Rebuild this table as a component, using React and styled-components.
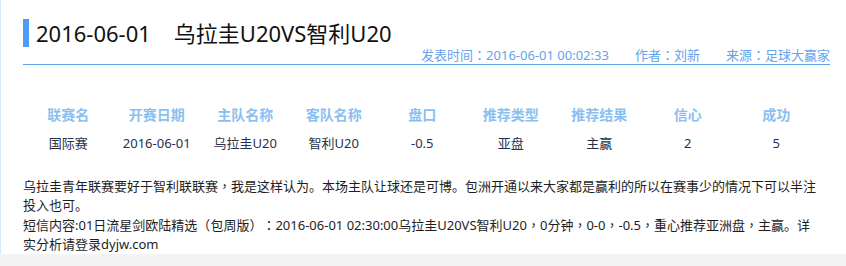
import styled, { createGlobalStyle } from "styled-components";

const GlobalStyle = createGlobalStyle`
  html, body {
    margin: 0;
    padding: 0;
    background: #f4f4f4;
  }
  body {
    font-family: "Noto Sans", "Noto Sans CJK SC", sans-serif;
    text-spacing-trim: space-all;
  }
`;

const columns = ["联赛名", "开赛日期", "主队名称", "客队名称", "盘口", "推荐类型", "推荐结果", "信心", "成功"];
const values = ["国际赛", "2016-06-01", "乌拉圭U20", "智利U20", "-0.5", "亚盘", "主赢", "2", "5"];

// full-width comma, colon and brackets sit centred in the original font
const withPunct = (text) =>
  text.split(/([，：（）])/).map((part, i) =>
    /^[，：（）]$/.test(part) ? (
      <Punct key={i} lang="zh-TW">
        {part}
      </Punct>
    ) : (
      part
    )
  );

const App = () => {
  return (
    <>
      <GlobalStyle />
      <Article lang="zh-CN">
        <Title>
          2016-06-01<Match>乌拉圭U20VS智利U20</Match>
        </Title>
        <Meta>
          <span>{withPunct("发表时间：2016-06-01 00:02:33")}</span>
          <span>{withPunct("作者：刘新")}</span>
          <span>{withPunct("来源：足球大赢家")}</span>
        </Meta>
        <Table>
          {columns.map((c) => (
            <Head key={c}>{c}</Head>
          ))}
          {values.map((v, i) => (
            <Cell key={i}>{v}</Cell>
          ))}
        </Table>
        <Body>
          <p>{withPunct("乌拉圭青年联赛要好于智利联联赛，我是这样认为。本场主队让球还是可博。包洲开通以来大家都是赢利的所以在赛事少的情况下可以半注投入也可。")}</p>
          <p>{withPunct("短信内容:01日流星剑欧陆精选（包周版）：2016-06-01 02:30:00乌拉圭U20VS智利U20，0分钟，0-0，-0.5，重心推荐亚洲盘，主赢。详实分析请登录dyjw.com")}</p>
        </Body>
      </Article>
    </>
  );
};

export default App;

const Article = styled.div`
  background: #fff;
  border-left: 1px solid #d8eafb;
  padding: 19px 16px 0 22px;
`;

const Title = styled.h1`
  margin: 0;
  border-left: 6px solid #4d9cf6;
  padding-left: 7px;
  height: 28px;
  line-height: 28px;
  font-size: 22px;
  font-weight: normal;
  color: #111;
  white-space: nowrap;
`;

const Match = styled.span`
  margin-left: 23px;
`;

const Punct = styled.span`
  font-family: "Noto Sans CJK SC", sans-serif;
`;

const Meta = styled.div`
  display: flex;
  justify-content: flex-end;
  gap: 26px;
  height: 16px;
  line-height: 16px;
  padding-bottom: 1px;
  border-bottom: 1px solid #5ea2ec;
  font-size: 13px;
  color: #64a3ee;
`;

const Table = styled.div`
  display: grid;
  grid-template-columns: repeat(9, 88.5px);
  grid-auto-rows: 29px;
  margin-top: 35px;
  margin-left: 1px;
  font-size: 13px;
`;

const Head = styled.div`
  text-align: center;
  line-height: 29px;
  font-size: 14px;
  font-weight: bold;
  color: #8bbff0;
`;

const Cell = styled.div`
  text-align: center;
  line-height: 29px;
  color: #26324c;
`;

const Body = styled.div`
  margin-top: 18px;
  margin-right: 12px;
  font-size: 13px;
  line-height: 19px;
  color: #1e1e1e;

  p {
    margin: 0;
  }
`;
